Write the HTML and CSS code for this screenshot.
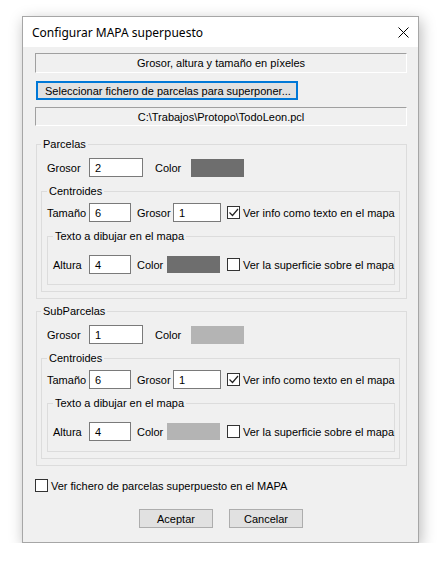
FILE: index.html
```html
<!DOCTYPE html>
<html lang="es">
<head>
    <meta charset="UTF-8">
    <title>Configurar MAPA superpuesto</title>
    <link rel="stylesheet" href="styles.css">
</head>
<body>
    <div class="dialog">
        <!-- Title bar -->
        <div class="titlebar">
            <span class="title">Configurar MAPA superpuesto</span>
            <span class="close">
                <svg width="11" height="11" viewBox="0 0 11 11"><path d="M0.5 0.5 L10.5 10.5 M10.5 0.5 L0.5 10.5" stroke="#000" stroke-width="1" fill="none"/></svg>
            </span>
        </div>

        <div class="content">
            <div class="static static-top">Grosor, altura y tamaño en píxeles</div>
            <button class="btn btn-default btn-file">Seleccionar fichero de parcelas para superponer...</button>
            <div class="static static-path">C:\Trabajos\Protopo\TodoLeon.pcl</div>

            <!-- Parcelas -->
            <fieldset class="group group-outer">
                <legend>Parcelas</legend>
                <div class="row row-outer">
                    <span class="lbl w42">Grosor</span>
                    <span class="edit w54">2</span>
                    <span class="lbl w36 ml12">Color</span>
                    <span class="swatch swatch-big dark"></span>
                </div>
                <fieldset class="group group-mid">
                    <legend>Centroides</legend>
                    <div class="row">
                        <span class="lbl w42">Tamaño</span>
                        <span class="edit w42">6</span>
                        <span class="lbl w36 ml6">Grosor</span>
                        <span class="edit w48">1</span>
                        <span class="check checked ml6"><svg width="11" height="11" viewBox="0 0 11 11"><path d="M1.5 5.5 L4.5 8.5 L10 2" stroke="#222" stroke-width="1.2" fill="none"/></svg></span>
                        <span class="check-lbl">Ver info como texto en el mapa</span>
                    </div>
                    <fieldset class="group group-inner">
                        <legend>Texto a dibujar en el mapa</legend>
                        <div class="row">
                            <span class="lbl w36">Altura</span>
                            <span class="edit w42">4</span>
                            <span class="lbl w30 ml6">Color</span>
                            <span class="swatch dark"></span>
                            <span class="check ml7"></span>
                            <span class="check-lbl">Ver la superficie sobre el mapa</span>
                        </div>
                    </fieldset>
                </fieldset>
            </fieldset>

            <!-- SubParcelas -->
            <fieldset class="group group-outer group-sub">
                <legend>SubParcelas</legend>
                <div class="row row-outer">
                    <span class="lbl w42">Grosor</span>
                    <span class="edit w54">1</span>
                    <span class="lbl w36 ml12">Color</span>
                    <span class="swatch swatch-big light"></span>
                </div>
                <fieldset class="group group-mid">
                    <legend>Centroides</legend>
                    <div class="row">
                        <span class="lbl w42">Tamaño</span>
                        <span class="edit w42">6</span>
                        <span class="lbl w36 ml6">Grosor</span>
                        <span class="edit w48">1</span>
                        <span class="check checked ml6"><svg width="11" height="11" viewBox="0 0 11 11"><path d="M1.5 5.5 L4.5 8.5 L10 2" stroke="#222" stroke-width="1.2" fill="none"/></svg></span>
                        <span class="check-lbl">Ver info como texto en el mapa</span>
                    </div>
                    <fieldset class="group group-inner">
                        <legend>Texto a dibujar en el mapa</legend>
                        <div class="row">
                            <span class="lbl w36">Altura</span>
                            <span class="edit w42">4</span>
                            <span class="lbl w30 ml6">Color</span>
                            <span class="swatch light"></span>
                            <span class="check ml7"></span>
                            <span class="check-lbl">Ver la superficie sobre el mapa</span>
                        </div>
                    </fieldset>
                </fieldset>
            </fieldset>

            <div class="row row-bottom">
                <span class="check"></span>
                <span class="check-lbl">Ver fichero de parcelas superpuesto en el MAPA</span>
            </div>

            <div class="buttons">
                <button class="btn">Aceptar</button>
                <button class="btn">Cancelar</button>
            </div>
        </div>
    </div>
</body>
</html>
```

FILE: styles.css
```css
body {
    margin: 0;
    background-color: #ffffff;
    font-family: "Liberation Sans", Arial, sans-serif;
    font-size: 11px;
    color: #000;
}
.dialog {
    margin: 16px 0 0 22px;
    width: 395px;
    height: 525px;
    border: 1px solid #a6a6a6;
    background-color: #f0f0f0;
    box-shadow: 2px 4px 14px rgba(0, 0, 0, 0.28);
}

/* Title bar */
.titlebar {
    height: 30px;
    background-color: #ffffff;
    display: flex;
    align-items: center;
    justify-content: space-between;
    padding-left: 9px;
}
.title {
    font-family: "Noto Sans", sans-serif;
    font-size: 12px;
}
.close {
    width: 30px;
    height: 30px;
    display: flex;
    align-items: center;
    justify-content: center;
}

.content {
    padding: 0 11px 0 12px;
}

/* Static labels with sunken edge */
.static {
    box-sizing: border-box;
    height: 20px;
    border-top: 1px solid #a0a0a0;
    border-left: 1px solid #a0a0a0;
    border-right: 1px solid #ffffff;
    border-bottom: 1px solid #ffffff;
    display: flex;
    align-items: center;
    justify-content: center;
}
.static-top {
    margin-top: 6px;
}
.static-path {
    margin-top: 7px;
    height: 19px;
}

/* Buttons */
.btn {
    box-sizing: border-box;
    height: 19px;
    width: 74px;
    padding: 0;
    font-family: inherit;
    font-size: 11px;
    color: #000;
    background-color: #e1e1e1;
    border: 1px solid #adadad;
    border-radius: 0;
    white-space: nowrap;
}
.btn-default {
    border: 2px solid #0078d7;
}
.btn-file {
    display: block;
    margin: 8px 0 0 1px;
    width: 262px;
    text-align: left;
    padding-left: 7px;
}

/* Group boxes */
.group {
    border: 1px solid #dcdcdc;
    margin: 0;
    min-width: 0;
}
.group legend {
    padding: 0 2px;
    line-height: 15px;
}
.group-outer {
    margin: 11px 0 0 1px;
    padding: 6px 6px 6px 4px;
}
.group-sub {
    margin-top: 5px;
}
.group-mid {
    margin-top: 7px;
    padding: 4px 4px 6px 5px;
}
.group-inner {
    margin-top: 7px;
    padding: 11px 10px 10px 5px;
}

/* Rows of controls */
.row {
    display: flex;
    align-items: center;
    height: 19px;
}
.row-outer {
    padding-left: 6px;
}
.lbl {
    flex: none;
    white-space: nowrap;
}
.w30 { width: 30px; }
.w36 { width: 36px; }
.w42 { width: 42px; }
.ml6 { margin-left: 6px; }
.ml7 { margin-left: 7px; }
.ml12 { margin-left: 12px; }

.edit {
    box-sizing: border-box;
    flex: none;
    height: 19px;
    border: 1px solid #7a7a7a;
    background-color: #ffffff;
    padding-left: 5px;
    display: flex;
    align-items: center;
}
.edit.w42 { width: 42px; }
.edit.w48 { width: 48px; }
.edit.w54 { width: 54px; }

.swatch {
    flex: none;
    width: 53px;
    height: 17px;
}
.swatch-big {
    height: 18px;
}
.dark { background-color: #6e6e6e; }
.light { background-color: #b4b4b4; }

.check {
    box-sizing: border-box;
    flex: none;
    width: 13px;
    height: 13px;
    border: 1px solid #333333;
    background-color: #ffffff;
    display: flex;
    align-items: center;
    justify-content: center;
}
.check-lbl {
    margin-left: 3px;
    white-space: nowrap;
}

.row-bottom {
    margin-top: 10px;
}

.buttons {
    display: flex;
    justify-content: center;
    gap: 16px;
    margin-top: 14px;
}
```
